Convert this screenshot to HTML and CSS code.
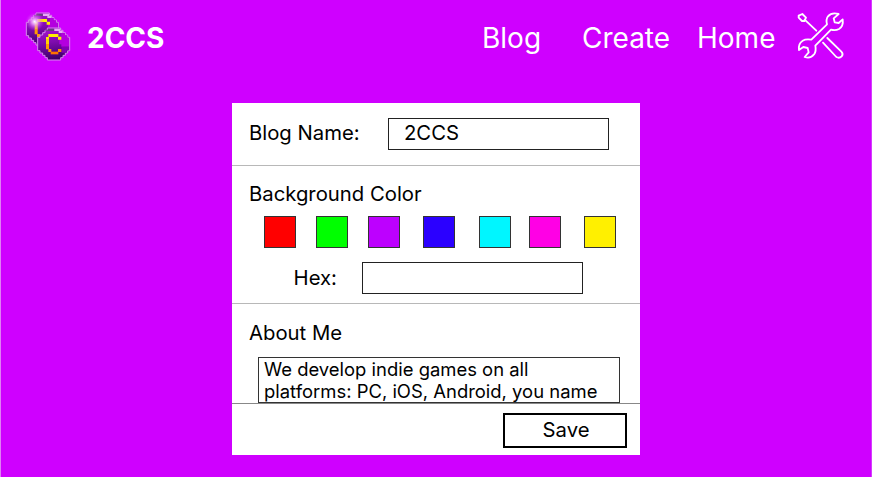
FILE: index.html
```html
<!DOCTYPE html>
<html lang="en">
<head>
<meta charset="utf-8">
<title>2CCS</title>
<link rel="stylesheet" href="styles.css">
</head>
<body>
<header class="bar">
  <svg class="logo" viewBox="0 0 180 180">
    <defs>
      <linearGradient id="coin" x1="0.2" y1="0" x2="0.35" y2="1">
        <stop offset="0" stop-color="#a414d0"/><stop offset="0.45" stop-color="#800cb0"/><stop offset="1" stop-color="#3a0068"/>
      </linearGradient>
      <radialGradient id="shine"><stop offset="0" stop-color="#fff"/><stop offset="0.35" stop-color="#f0a0ff" stop-opacity="0.8"/><stop offset="1" stop-color="#d030f0" stop-opacity="0"/></radialGradient>
      <g id="disc">
        <path d="M30 1H70V8H77V15H84V22H91V29H97V69H91V76H84V83H77V90H70V97H30V90H23V83H16V76H8V69H1V29H8V22H16V15H23V8H30Z" fill="url(#coin)" stroke="#d58bea" stroke-width="3"/>
        <path d="M72 16H83V23H90V30H95V57H72V50H66V28H72Z" fill="#b400df"/>
        <path d="M73 57H95V68H88V75H73Z" fill="#8100b5"/>
        <path d="M31 3H50V10H24V8H31Z" fill="#674080"/>
        <path d="M51 3H69V10H76V16H64V10H51Z" fill="#e6aaf5"/>
        <path d="M33 19H63V27H72V36H62V28H35V36H26V28H33Z" fill="#fff000"/>
        <path d="M26 35H35V50H26Z" fill="#ffd500"/>
        <path d="M26 49H35V64H42V73H33V65H26Z" fill="#ff9c00"/>
        <path d="M40 72H63V80H40Z" fill="#ff7300"/>
        <path d="M62 64H72V73H62Z" fill="#ff8c00"/>
      </g>
    </defs>
    <g transform="translate(18 20)"><use href="#disc"/><circle cx="26" cy="27" r="28" fill="url(#shine)"/></g>
    <use href="#disc" transform="translate(52 65)"/>
  </svg>
  <h1 class="brand">2CCS</h1>
  <nav class="nav">
    <a class="blog">Blog</a><a class="create">Create</a><a class="home">Home</a>
  </nav>
  <svg class="tools" viewBox="0 0 180 180">
    <path d="M26 29L37 24L48 35L43 45L36 45L26 35ZM44 41L79 74M99 110L139 153Q148 158 155 151Q161 144 154 137L112 96"/>
    <path d="M146 24Q125 18 114 31Q107 41 111 55L64 101Q48 98 38 104Q24 113 27 132L40 123L53 126L56 139L44 153Q62 159 73 144Q79 135 76 119L123 71Q136 75 147 69Q161 60 158 40L146 51L134 49L131 37Z"/>
  </svg>
</header>
<main class="card">
  <section class="row name-row">
    <label class="label">Blog Name:</label><div class="field name-field">2CCS</div>
  </section>
  <section class="row color-row">
    <h2 class="label">Background Color</h2>
    <div class="swatches">
      <i class="swatch red"></i><i class="swatch green"></i><i class="swatch purple"></i><i class="swatch blue"></i><i class="swatch cyan"></i><i class="swatch pink"></i><i class="swatch yellow"></i>
    </div>
    <div class="hex"><label class="label">Hex:</label><div class="field hex-field"></div></div>
  </section>
  <section class="about-row">
    <h2 class="label">About Me</h2>
    <div class="about">We develop indie games on all<br>platforms: PC, iOS, Android, you name</div>
  </section>
  <footer class="footer"><button class="save">Save</button></footer>
</main>
</body>
</html>
```
FILE: styles.css
```css
* { box-sizing: border-box; }
body {
  margin: 0;
  height: 477px;
  overflow: hidden;
  background: #cf00ff;
  border-left: 1px solid #df80f5;
  border-right: 1px solid #d53cff;
  font-family: Inter, sans-serif;
  color: #000;
}
.bar { display: flex; height: 103px; color: #fff; }
.logo { width: 60px; height: 60px; margin: 6px 0 0 19px; }
.brand { margin: 21px 0 0 7px; width: 100px; font-size: 28px; line-height: 34px; font-weight: 700; }
.nav { display: flex; margin: 21px 0 0 295px; width: 308px; font-size: 28px; line-height: 34px; font-weight: 380; }
.blog { width: 100px; }
.create { width: 115px; }
.tools { width: 60px; height: 60px; margin-top: 6px; fill: none; stroke: #fff; stroke-width: 5.5; stroke-linejoin: round; stroke-linecap: round; }
.card { width: 408px; height: 352px; margin-left: 231px; background: #fff; }
.row { border-bottom: 1px solid #b8b8b8; }
.label { margin: 0; font-size: 20.3px; line-height: 24px; font-weight: 370; white-space: nowrap; }
.field { border: 1px solid #222; width: 221px; height: 32px; font-size: 20.3px; font-weight: 370; line-height: 28px; }
.name-row { display: flex; height: 63px; padding: 15px 0 0 17px; }
.name-row .label { width: 139px; margin-top: 3px; }
.name-field { padding-left: 15px; }
.color-row { height: 138px; padding: 16px 0 0 17px; }
.swatches { display: flex; margin: 10px 0 0 15px; }
.swatch { width: 32px; height: 32px; border: 1px solid #333; }
.red { background: #f00; margin-right: 20px; }
.green { background: #0f0; margin-right: 20px; }
.purple { background: #bd00ff; margin-right: 23px; }
.blue { background: #2b00ff; margin-right: 24px; }
.cyan { background: #00f6ff; margin-right: 18px; }
.pink { background: #ff00e5; margin-right: 23px; }
.yellow { background: #fff000; }
.hex { display: flex; margin: 14px 0 0 44.6px; }
.hex .label { width: 68.4px; margin-top: 4px; }
.about-row { height: 99px; padding: 17px 0 0 17px; }
.about { width: 362px; height: 46px; margin: 12px 0 0 9px; padding-left: 5px; border: 1px solid #333; font-size: 18.45px; font-weight: 370; line-height: 22px; white-space: nowrap; }
.footer { display: flex; justify-content: flex-end; height: 52px; padding: 9px 13px 0 0; border-top: 1px solid #888; }
.save { width: 124px; height: 35px; padding: 0 0 2px 2px; border: 2px solid #000; background: #fff; color: #000; font: 370 20.3px/24px Inter, sans-serif; }
```
